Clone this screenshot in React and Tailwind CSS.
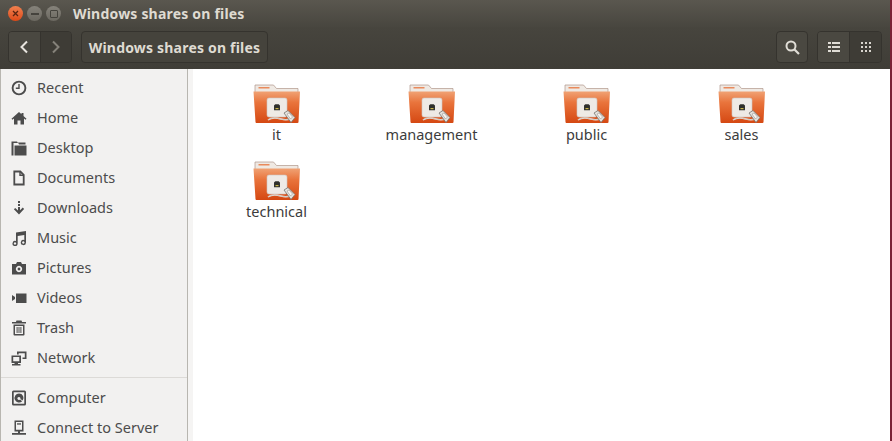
const font = "font-['Noto_Sans','Open_Sans',sans-serif]";

const iconProps = { width: 16, height: 16, viewBox: "0 0 16 16", fill: "#4c4c4c" };

const Recent = () => (
  <svg {...iconProps} fill="none" stroke="#4c4c4c">
    <circle cx="8" cy="8" r="6.4" strokeWidth="1.9" />
    <path d="M8 4v4.300H4.800" strokeWidth="1.400" />
  </svg>
);
const Home = () => (
  <svg {...iconProps}>
    <path d="M8 2 .5 8.800l1 1L3 8.500V14.500h3.500v-4h3v4H13V8.500l1.500 1.300 1-1L12.500 6V3h-2v1.200Z" />
  </svg>
);
const Desktop = () => (
  <svg {...iconProps}>
    <path d="M.5 1.500h5.500l1 1.500H2.500v12.500h-2Z" />
    <path d="M3.500 5.500H15.500v10H3.500Z" />
    <path d="M7 2.500h7.500V4.500H8Z" />
  </svg>
);
const Documents = () => (
  <svg {...iconProps} fill="none" stroke="#4c4c4c" strokeWidth="1.800">
    <path d="M3.300 1.500h6l3.400 3.400v9.600H3.300Z" />
    <path d="M9 1.500v3.800h3.700" strokeWidth="1.400" />
  </svg>
);
const Downloads = () => (
  <svg {...iconProps}>
    <rect x="7" y="1" width="2" height="2" />
    <rect x="7" y="4" width="2" height="2" />
    <path d="M7 7h2v3.200l2.800-2.600 1.300 1.300L8 14.500 2.900 9.200l1.300-1.300L7 10.500Z" />
  </svg>
);
const Music = () => (
  <svg {...iconProps}>
    <path
      fillRule="evenodd"
      d="M5 2.500 15 1V12.500a2.600 2.600 0 1 1-1.700-2.400V5L6.700 6v7.500a2.600 2.600 0 1 1-1.700-2.400ZM4 12.300a1.200 1.200 0 1 0 .01 0ZM12.300 11.300a1.200 1.200 0 1 0 .01 0Z"
    />
  </svg>
);
const Pictures = () => (
  <svg {...iconProps}>
    <path
      fillRule="evenodd"
      d="M1 4H5l1-2h4l1 2h4v10.500H1ZM8 5.800a3.200 3.200 0 1 0 .01 0ZM8 7.600a1.400 1.400 0 1 1-.01 0Z"
    />
  </svg>
);
const Videos = () => (
  <svg {...iconProps}>
    <path d="M5 3.500h10.500v9.500H5Z" />
    <path d="M1 5l3 2v2l-3 2Z" />
  </svg>
);
const Trash = () => (
  <svg {...iconProps}>
    <path d="M5.500 .5h5l.6 1.500H15V3.500H1V2h3.900ZM6.500 1.500h3v.5h-3Z" />
    <path
      fillRule="evenodd"
      d="M2.500 4.500h11v10a1 1 0 0 1-1 1h-9a1 1 0 0 1-1-1ZM4 6V14h8V6ZM5.600 7h1v6h-1ZM7.500 7h1v6h-1ZM9.400 7h1v6h-1Z"
    />
  </svg>
);
const Network = () => (
  <svg {...iconProps}>
    <path
      fillRule="evenodd"
      d="M.5 5.500h9.500v7.500H7v1h2.500v1.500H1V14h2.500v-1H.5ZM2.200 7v4.200h6.100V7Z"
    />
    <path d="M6 1.500h9.500V9H11.500V7.400h2.300V3.200H7.700V4.500H6Z" />
  </svg>
);
const Computer = () => (
  <svg {...iconProps}>
    <path
      fillRule="evenodd"
      d="M2.500 .5h11A1.500 1.500 0 0 1 15 2v12a1.500 1.500 0 0 1-1.500 1.500h-11A1.500 1.500 0 0 1 1 14V2A1.500 1.500 0 0 1 2.500 .5ZM2.700 2.200v11.600h10.600V2.200Z"
    />
    <path
      fillRule="evenodd"
      d="M8 3.500a4.500 4.500 0 1 0 3.200 7.700L9 9.500a1.500 1.500 0 1 1-1-2.500 1.500 1.500 0 0 1 1.400 2.100l2.300 1.500A4.500 4.500 0 0 0 8 3.500Z"
    />
  </svg>
);
const Server = () => (
  <svg {...iconProps}>
    <path
      fillRule="evenodd"
      d="M3.500 .5h9v11H9V13h6v1.800H1V13h6v-1.500H3.500ZM5 2v7.800h6V2Z"
    />
    <rect x="6" y="3.300" width="4" height="1.300" />
  </svg>
);

const places = [
  ["Recent", Recent],
  ["Home", Home],
  ["Desktop", Desktop],
  ["Documents", Documents],
  ["Downloads", Downloads],
  ["Music", Music],
  ["Pictures", Pictures],
  ["Videos", Videos],
  ["Trash", Trash],
  ["Network", Network],
];

const devices = [
  ["Computer", Computer],
  ["Connect to Server", Server],
];

const shares = ["it", "management", "public", "sales", "technical"];

function SidebarRow({ label, Icon }) {
  return (
    <div className="flex h-[30px] items-center pl-[10px]">
      <Icon />
      <span className="ml-[10px] text-[14.5px] text-[#4c4c4c]">{label}</span>
    </div>
  );
}

// orange ubuntu folder with the samba share emblem
function ShareFolder() {
  return (
    <svg width="48" height="40" viewBox="0 0 48 40">
      <defs>
        <linearGradient id="folderFront" x1="0" y1="0" x2="0" y2="1">
          <stop offset="0" stopColor="#f0a274" />
          <stop offset="0.35" stopColor="#e9743c" />
          <stop offset="1" stopColor="#d54812" />
        </linearGradient>
      </defs>
      <path d="M2 1h18.500l3 3.500h21.500V10H2Z" fill="#efe9e3" stroke="#b0968a" strokeWidth="0.7" />
      <rect x="5.500" y="3" width="11" height="1.500" fill="#e98a5c" />
      <path d="M.5 7.500h46.500L45.500 38a1 1 0 0 1-1 1h-41a1 1 0 0 1-1-1Z" fill="url(#folderFront)" />
      <rect x="14" y="14" width="20" height="19" rx="2" fill="#eeeae6" stroke="#cfc8c2" strokeWidth="0.6" />
      <path d="M20.500 27v-5.500l1.500-1.500h4l1.500 1.500V27Z" fill="#2f2f2b" transform="translate(3.600 3.300) scale(.85)" />
      <rect x="22.500" y="24" width="3" height="1.200" fill="#c9b64a" />
      <path d="M15 36c4-3 9-2 13-1s6 1 9 0" fill="none" stroke="#f6f3ef" strokeWidth="1.500" />
      <path d="M15 36c4-3 9-2 13-1s6 1 9 0" fill="none" stroke="#8a8078" strokeWidth="0.400" />
      <path d="M31 29l4-2.500 7 7-4 5Z" fill="#e4e2de" stroke="#77736e" strokeWidth="0.800" />
      <path d="M34 30l2-1 3.500 4-2 2Z" fill="#f8f6f3" stroke="#8a8680" strokeWidth="0.500" />
    </svg>
  );
}

function Share({ name }) {
  return (
    <div className="flex w-[155px] flex-col items-center">
      <ShareFolder />
      <span className="text-[14.5px] leading-[20px] text-[#3c3c3c]">{name}</span>
    </div>
  );
}

export default function App() {
  return (
    <div className={`flex h-[441px] w-[892px] overflow-hidden bg-white ${font}`}>
      <div className="flex min-w-0 flex-1 flex-col">
        {/* title bar */}
        <div className="flex h-[27px] shrink-0 items-center bg-gradient-to-b from-[#5a574f] to-[#48463f] pl-[8px]">
          <div className="flex h-[15px] w-[15px] items-center justify-center rounded-full bg-gradient-to-b from-[#f0804e] to-[#dd4814] text-[#5a2410]">
            <svg width="7" height="7" viewBox="0 0 7 7" stroke="currentColor" strokeWidth="1.300">
              <path d="M1 1l5 5M6 1L1 6" />
            </svg>
          </div>
          <div className="ml-[4px] flex h-[15px] w-[15px] items-center justify-center rounded-full bg-gradient-to-b from-[#86837b] to-[#6b6860]">
            <div className="h-[2px] w-[8px] bg-[#45433d]" />
          </div>
          <div className="ml-[4px] flex h-[15px] w-[15px] items-center justify-center rounded-full bg-gradient-to-b from-[#86837b] to-[#6b6860]">
            <div className="h-[8px] w-[8px] rounded-[1px] border border-[#45433d]" />
          </div>
          <span className="ml-[12px] text-[14px] font-bold tracking-[0.2px] text-[#dfdbd2]">Windows shares on files</span>
        </div>

        {/* toolbar */}
        <div className="flex h-[42px] shrink-0 items-center justify-between bg-gradient-to-b from-[#47453e] to-[#3f3d37] pb-[2px] pl-[8px] pr-[8px]">
          <div className="flex items-center gap-[9px]">
            <div className="flex h-[32px] w-[64px] overflow-hidden rounded-[4px] border border-[#35332e]">
              <div className="flex flex-1 items-center justify-center border-r border-[#35332e] bg-[#4a4841] text-[#e8e5df]">
                <svg width="10" height="14" viewBox="0 0 10 14" fill="none" stroke="currentColor" strokeWidth="2">
                  <path d="M8 1.500 2.500 7 8 12.500" />
                </svg>
              </div>
              <div className="flex flex-1 items-center justify-center bg-[#3e3c36] text-[#85827a]">
                <svg width="10" height="14" viewBox="0 0 10 14" fill="none" stroke="currentColor" strokeWidth="2">
                  <path d="M2 1.500 7.500 7 2 12.500" />
                </svg>
              </div>
            </div>
            <div className="flex h-[32px] w-[187px] items-center justify-center rounded-[4px] border border-[#35332e] bg-[#45433c] text-[14px] font-bold tracking-[0.2px] text-[#dfdbd2]">
              Windows shares on files
            </div>
          </div>
          <div className="flex items-center gap-[9px]">
            <div className="flex h-[32px] w-[32px] items-center justify-center rounded-[4px] border border-[#35332e] bg-[#4a4841] text-[#e0ddd6]">
              <svg width="15" height="15" viewBox="0 0 15 15" fill="none" stroke="currentColor">
                <circle cx="6" cy="6" r="4.500" strokeWidth="2" />
                <path d="M9.500 9.500 14 14" strokeWidth="2.200" />
              </svg>
            </div>
            <div className="flex h-[32px] w-[65px] overflow-hidden rounded-[4px] border border-[#35332e]">
              <div className="flex flex-1 items-center justify-center border-r border-[#35332e] bg-[#4a4841]">
                <svg width="12" height="10" viewBox="0 0 12 10" fill="#e0ddd6">
                  <rect x="0" y="0" width="3" height="2" />
                  <rect x="4" y="0" width="8" height="2" />
                  <rect x="0" y="4" width="3" height="2" />
                  <rect x="4" y="4" width="8" height="2" />
                  <rect x="0" y="8" width="3" height="2" />
                  <rect x="4" y="8" width="8" height="2" />
                </svg>
              </div>
              <div className="flex flex-1 items-center justify-center bg-[#3e3c36]">
                <svg width="10" height="10" viewBox="0 0 10 10" fill="#d8d5ce">
                  <rect x="0" y="0" width="2" height="2" />
                  <rect x="4" y="0" width="2" height="2" />
                  <rect x="8" y="0" width="2" height="2" />
                  <rect x="0" y="4" width="2" height="2" />
                  <rect x="4" y="4" width="2" height="2" />
                  <rect x="8" y="4" width="2" height="2" />
                  <rect x="0" y="8" width="2" height="2" />
                  <rect x="4" y="8" width="2" height="2" />
                  <rect x="8" y="8" width="2" height="2" />
                </svg>
              </div>
            </div>
          </div>
        </div>

        <div className="flex min-h-0 flex-1">
          {/* sidebar */}
          <div className="h-full w-[188px] shrink-0 border-x border-[#b8b6b0] bg-[#f2f1f0] pt-[4px]">
            {places.map(([label, Icon]) => (
              <SidebarRow key={label} label={label} Icon={Icon} />
            ))}
            <div className="mb-[5px] mt-[4px] h-px bg-[#dcdad7]" />
            {devices.map(([label, Icon]) => (
              <SidebarRow key={label} label={label} Icon={Icon} />
            ))}
          </div>
          <div className="w-[5px] shrink-0 bg-[#f5f4f3]" />

          {/* files */}
          <div className="flex-1 pl-[6px] pt-[15px]">
            <div className="flex w-[620px] flex-wrap gap-y-[17px]">
              {shares.map((name) => (
                <Share key={name} name={name} />
              ))}
            </div>
          </div>
        </div>
      </div>
      <div className="w-[2px] shrink-0 bg-[#7a2236]" />
    </div>
  );
}
